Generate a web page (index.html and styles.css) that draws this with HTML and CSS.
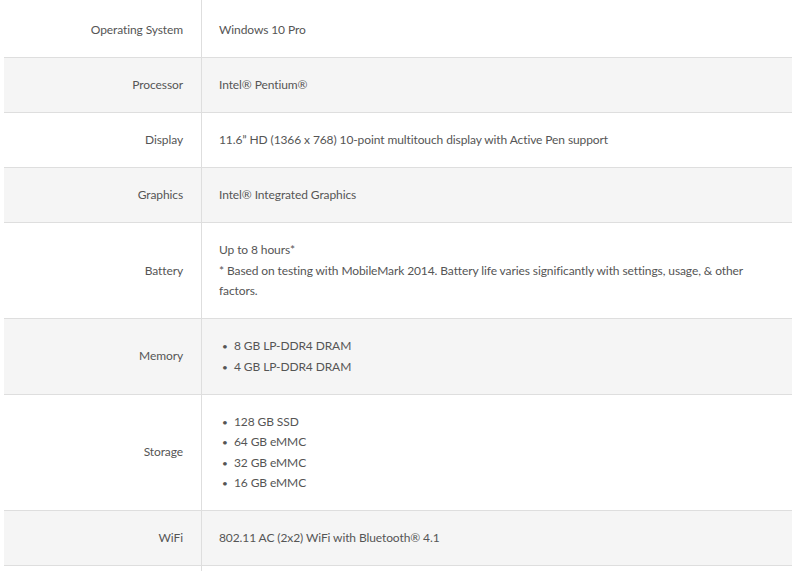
FILE: index.html
```html
<!DOCTYPE html>
<html lang="en">
<head>
<meta charset="utf-8">
<title>Specifications</title>
<link rel="stylesheet" href="styles.css">
</head>
<body>
<div class="specs">
  <div class="row">
    <div class="label">Operating System</div>
    <div class="value">Windows 10 Pro</div>
  </div>
  <div class="row">
    <div class="label">Processor</div>
    <div class="value">Intel® Pentium®</div>
  </div>
  <div class="row">
    <div class="label">Display</div>
    <div class="value">11.6” HD (1366 x 768) 10-point multitouch display with Active Pen support</div>
  </div>
  <div class="row">
    <div class="label">Graphics</div>
    <div class="value">Intel® Integrated Graphics</div>
  </div>
  <div class="row">
    <div class="label">Battery</div>
    <div class="value">Up to 8 hours*<br>* Based on testing with MobileMark 2014. Battery life varies significantly with settings, usage, &amp; other factors.</div>
  </div>
  <div class="row">
    <div class="label">Memory</div>
    <div class="value">
      <ul class="bullets">
        <li>8 GB LP-DDR4 DRAM</li>
        <li>4 GB LP-DDR4 DRAM</li>
      </ul>
    </div>
  </div>
  <div class="row">
    <div class="label">Storage</div>
    <div class="value">
      <ul class="bullets">
        <li>128 GB SSD</li>
        <li>64 GB eMMC</li>
        <li>32 GB eMMC</li>
        <li>16 GB eMMC</li>
      </ul>
    </div>
  </div>
  <div class="row">
    <div class="label">WiFi</div>
    <div class="value">802.11 AC (2x2) WiFi with Bluetooth® 4.1</div>
  </div>
  <div class="row">
    <div class="label">&nbsp;</div>
    <div class="value">&nbsp;</div>
  </div>
</div>
</body>
</html>
```
FILE: styles.css
```css
html, body {
  margin: 0;
  padding: 0;
  background: #ffffff;
  overflow: hidden;
}

body {
  font-family: Lato, "Open Sans", "Liberation Sans", sans-serif;
  font-size: 12px;
  letter-spacing: -0.1px;
  line-height: 20.5px;
  color: #555555;
}

.specs {
  margin: 0 8px 0 4px;
}

.row {
  display: grid;
  grid-template-columns: 198px 1fr;
  border-bottom: 1px solid #dedede;
}

.row:nth-child(even) {
  background: #f5f5f5;
}

.label {
  text-align: right;
  padding: 17px 18px 16.5px;
  border-right: 1px solid #dedede;
  display: flex;
  align-items: center;
  justify-content: flex-end;
}

.value {
  padding: 17px 18px 16.5px 17px;
}

.row:first-child .label,
.row:first-child .value {
  padding-top: 20px;
}

.bullets {
  list-style: none;
  margin: 0;
  padding: 0;
}

.bullets li {
  display: block;
}

.bullets li::before {
  content: "•";
  display: inline-block;
  width: 15px;
  padding-left: 3px;
  box-sizing: border-box;
  font-size: 10px;
  vertical-align: top;
}
```
